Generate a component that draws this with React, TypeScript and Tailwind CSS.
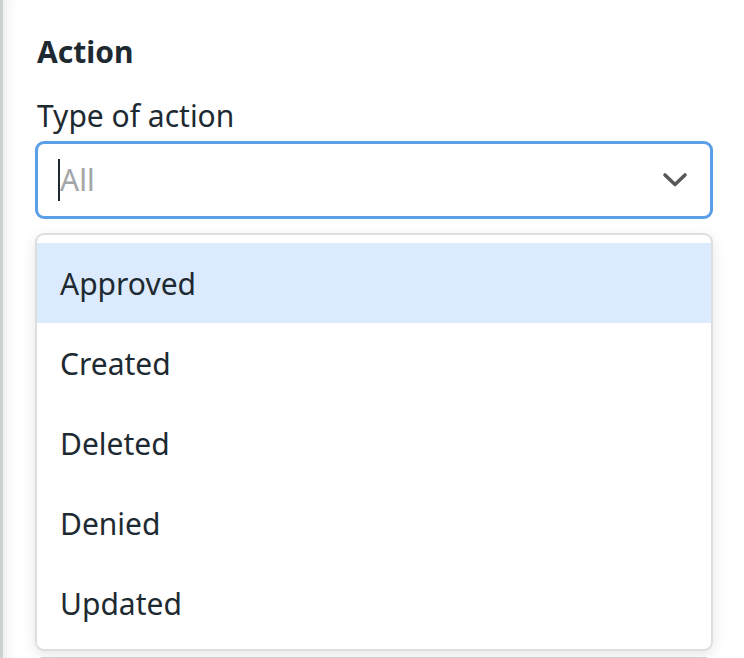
import React, { useState } from "react";

const options = ["Approved", "Created", "Deleted", "Denied", "Updated"];

const Chevron = () => (
  <svg width="26" height="16" viewBox="0 0 26 16" fill="none">
    <polyline
      points="3,3 13,12.5 23,3"
      stroke="#58595b"
      strokeWidth="3.6"
      strokeLinecap="round"
      strokeLinejoin="round"
    />
  </svg>
);

const App = () => {
  const [hovered, setHovered] = useState(0);

  return (
    <div
      className="h-[658px] w-full bg-white border-l-[3px] border-[#cdd1d1] shadow-[inset_14px_0_16px_-14px_rgba(0,0,0,0.12)] text-[#1e2a32] overflow-hidden"
      style={{ fontFamily: "'Noto Sans', 'Open Sans', sans-serif" }}
    >
      <div className="pl-[32px] pr-[31px] pt-[34px]">
        <h2 className="text-[30px] font-bold leading-[36px] pl-[2px]">Action</h2>
        <div className="relative mt-[28px]">
          <label className="block text-[30px] leading-[36px] pl-[2px]">Type of action</label>
          <div className="mt-[7px] h-[78px] flex items-center justify-between rounded-[9px] border-[3px] border-[#5a9fe8] pl-[20px] pr-[22px]">
            <div className="flex items-center">
              <span className="w-[2px] h-[42px] bg-[#1e2a32]" />
              <span className="text-[30px] text-[#a3a6a8] leading-[36px]">All</span>
            </div>
            <Chevron />
          </div>

          <div className="mt-[438px] mx-[2px] h-[40px] rounded-t-[6px] border border-[#d4d6d8] bg-[#f6f7f7]" />

          <ul className="absolute left-0 right-0 top-[135px] z-10 rounded-[9px] border-2 border-[#dcdedf] bg-white pt-[8px] pb-[6px] shadow-[0_4px_14px_rgba(0,0,0,0.10)]">
            {options.map((opt, i) => (
              <li
                key={opt}
                onMouseEnter={() => setHovered(i)}
                className={
                  "h-[80px] flex items-center pl-[23px] text-[30px] cursor-pointer " +
                  (hovered === i ? "bg-[#dbeafd]" : "bg-white")
                }
              >
                {opt}
              </li>
            ))}
          </ul>
        </div>
      </div>
    </div>
  );
};

export default App;
